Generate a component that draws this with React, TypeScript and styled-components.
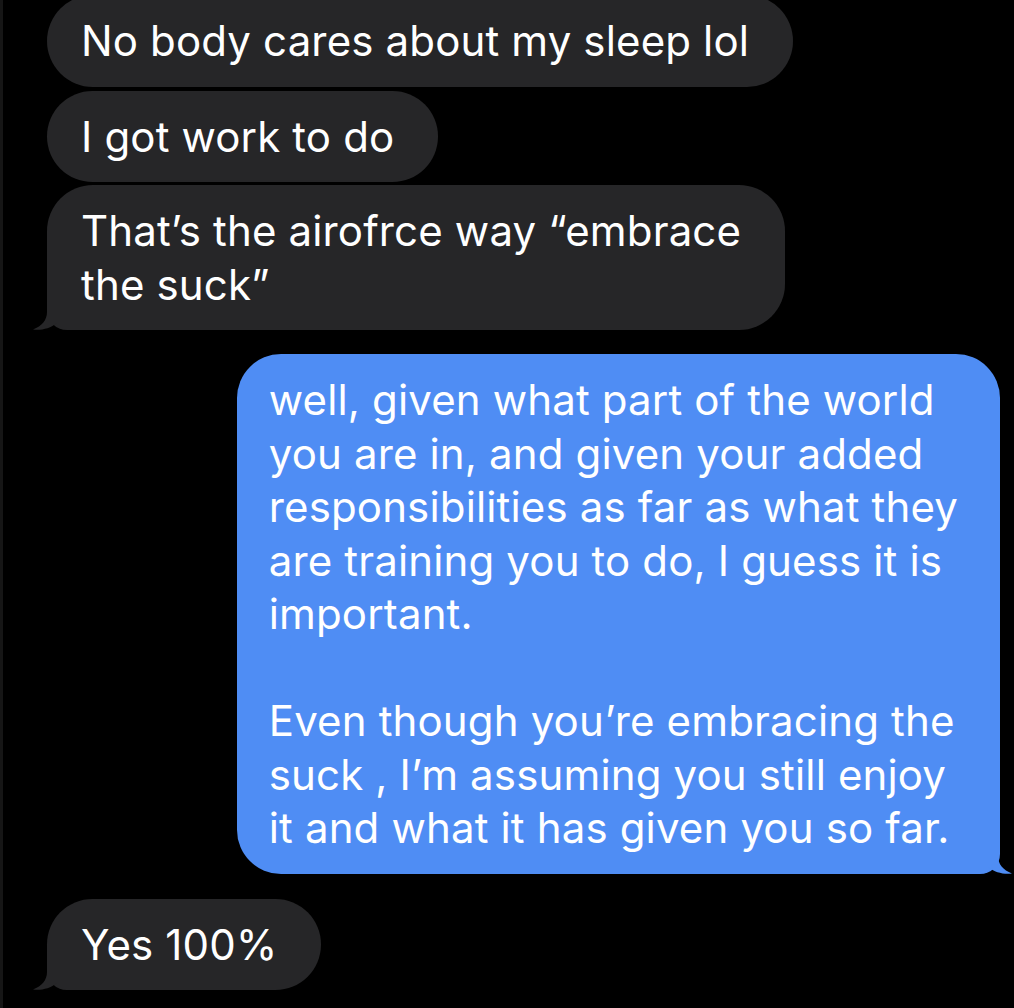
import styled, { createGlobalStyle } from "styled-components";

const GlobalStyle = createGlobalStyle`
  html, body {
    margin: 0;
    padding: 0;
    background: #000;
  }
  body {
    font-family: Inter, "Liberation Sans", sans-serif;
    -webkit-font-smoothing: antialiased;
  }
`;

const Thread = styled.div`
  width: 1014px;
  height: 1008px;
  overflow: hidden;
  background: #000;
  border-left: 3px solid #161616;
  box-sizing: border-box;
  display: flex;
  flex-direction: column;
  padding: 0 14px 0 44px;
`;

const Row = styled.div<{ $out?: boolean; $gap: number }>`
  display: flex;
  justify-content: ${(p) => (p.$out ? "flex-end" : "flex-start")};
  margin-top: ${(p) => p.$gap}px;
`;

const Bubble = styled.div<{ $out?: boolean; $tail?: boolean }>`
  position: relative;
  box-sizing: border-box;
  background: ${(p) => (p.$out ? "#4f8df4" : "#262628")};
  color: #fff;
  font-size: 42px;
  line-height: 53.5px;
  letter-spacing: 0.15px;
  padding: ${(p) => (p.$out ? "19px 42px 19px 32px" : "19px 44px 19px 34px")};
  border-radius: ${(p) => (p.$out ? "44px" : "46px")};
  ${(p) => (p.$tail && !p.$out ? "border-bottom-left-radius: 20px;" : "")}
  ${(p) => (p.$tail && p.$out ? "border-bottom-right-radius: 20px;" : "")}
`;

const Tail = styled.svg<{ $out?: boolean }>`
  position: absolute;
  bottom: 0;
  width: 34px;
  height: 40px;
  ${(p) => (p.$out ? "right: -12px; transform: scaleX(-1);" : "left: -14px;")}
`;

const Para = styled.p`
  margin: 0;
`;

function BubbleTail({ out }: { out?: boolean }) {
  return (
    <Tail $out={out} viewBox="0 0 34 40">
      <path
        d="M14 0 L14 22 C14 30 9 36 0 39.5 C8 40.6 17 38.6 24 33 L24 0 Z"
        fill={out ? "#4f8df4" : "#262628"}
      />
    </Tail>
  );
}

export default function App() {
  return (
    <>
      <GlobalStyle />
      <Thread>
        <Row $gap={-5}>
          <Bubble>No body cares about my sleep lol</Bubble>
        </Row>
        <Row $gap={4}>
          <Bubble>I got work to do</Bubble>
        </Row>
        <Row $gap={3}>
          <Bubble $tail>
            That’s the airofrce way “embrace
            <br />
            the suck”
            <BubbleTail />
          </Bubble>
        </Row>
        <Row $out $gap={24}>
          <Bubble $out $tail>
            <Para>
              well, given what part of the world
              <br />
              you are in, and given your added
              <br />
              responsibilities as far as what they
              <br />
              are training you to do, I guess it is
              <br />
              important.
            </Para>
            <Para>&nbsp;</Para>
            <Para>
              Even though you’re embracing the
              <br />
              suck , I’m assuming you still enjoy
              <br />
              it and what it has given you so far.
            </Para>
            <BubbleTail out />
          </Bubble>
        </Row>
        <Row $gap={25}>
          <Bubble $tail>
            Yes 100%
            <BubbleTail />
          </Bubble>
        </Row>
      </Thread>
    </>
  );
}
